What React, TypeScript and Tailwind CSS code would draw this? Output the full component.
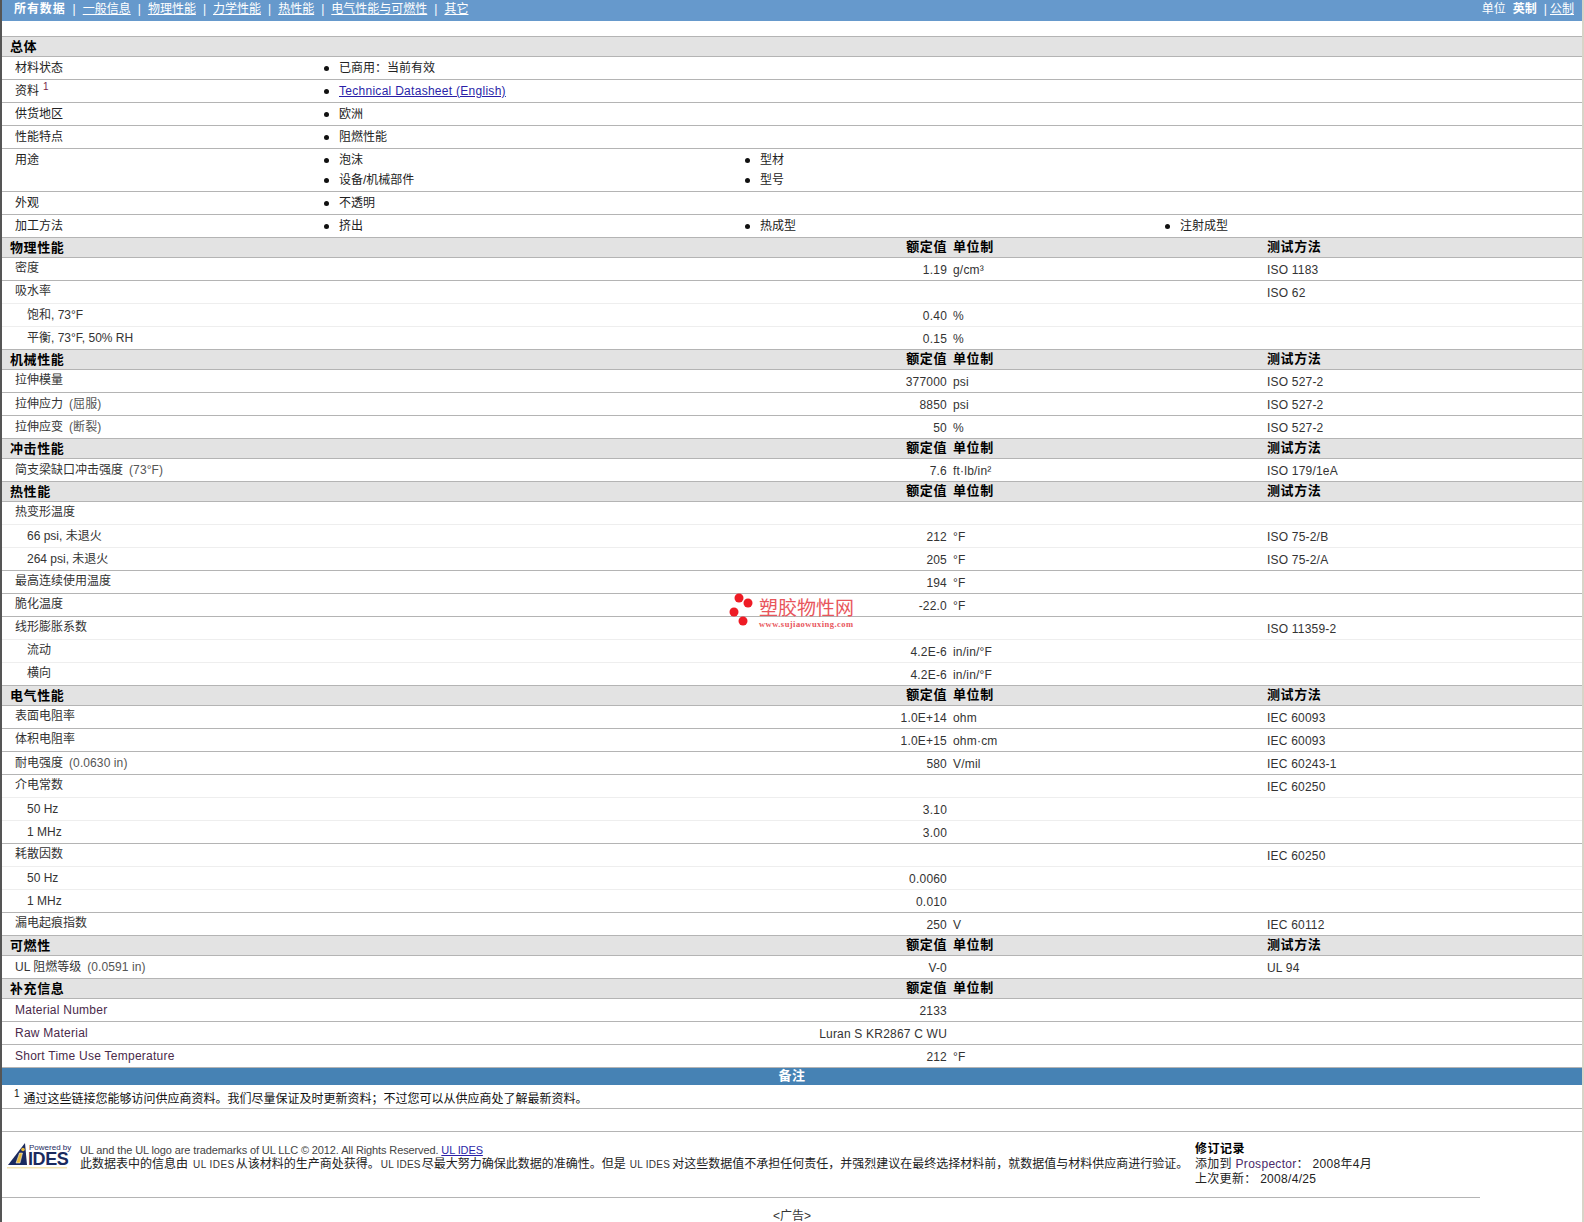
const cjk = "font-['Liberation_Sans','Noto_Sans_CJK_SC',sans-serif]";

type Row = { label: string; indent?: boolean; value?: string; unit?: string; method?: string; note?: string };

const sections: { title: string; method: boolean; rows: Row[] }[] = [
  {
    title: '物理性能',
    method: true,
    rows: [
      { label: '密度', value: '1.19', unit: 'g/cm³', method: 'ISO 1183' },
      { label: '吸水率', method: 'ISO 62' },
      { label: '饱和, 73°F', indent: true, value: '0.40', unit: '%' },
      { label: '平衡, 73°F, 50% RH', indent: true, value: '0.15', unit: '%' },
    ],
  },
  {
    title: '机械性能',
    method: true,
    rows: [
      { label: '拉伸模量', value: '377000', unit: 'psi', method: 'ISO 527-2' },
      { label: '拉伸应力', note: '(屈服)', value: '8850', unit: 'psi', method: 'ISO 527-2' },
      { label: '拉伸应变', note: '(断裂)', value: '50', unit: '%', method: 'ISO 527-2' },
    ],
  },
  {
    title: '冲击性能',
    method: true,
    rows: [{ label: '简支梁缺口冲击强度', note: '(73°F)', value: '7.6', unit: 'ft·lb/in²', method: 'ISO 179/1eA' }],
  },
  {
    title: '热性能',
    method: true,
    rows: [
      { label: '热变形温度' },
      { label: '66 psi, 未退火', indent: true, value: '212', unit: '°F', method: 'ISO 75-2/B' },
      { label: '264 psi, 未退火', indent: true, value: '205', unit: '°F', method: 'ISO 75-2/A' },
      { label: '最高连续使用温度', value: '194', unit: '°F' },
      { label: '脆化温度', value: '-22.0', unit: '°F' },
      { label: '线形膨胀系数', method: 'ISO 11359-2' },
      { label: '流动', indent: true, value: '4.2E-6', unit: 'in/in/°F' },
      { label: '横向', indent: true, value: '4.2E-6', unit: 'in/in/°F' },
    ],
  },
  {
    title: '电气性能',
    method: true,
    rows: [
      { label: '表面电阻率', value: '1.0E+14', unit: 'ohm', method: 'IEC 60093' },
      { label: '体积电阻率', value: '1.0E+15', unit: 'ohm·cm', method: 'IEC 60093' },
      { label: '耐电强度', note: '(0.0630 in)', value: '580', unit: 'V/mil', method: 'IEC 60243-1' },
      { label: '介电常数', method: 'IEC 60250' },
      { label: '50 Hz', indent: true, value: '3.10' },
      { label: '1 MHz', indent: true, value: '3.00' },
      { label: '耗散因数', method: 'IEC 60250' },
      { label: '50 Hz', indent: true, value: '0.0060' },
      { label: '1 MHz', indent: true, value: '0.010' },
      { label: '漏电起痕指数', value: '250', unit: 'V', method: 'IEC 60112' },
    ],
  },
  {
    title: '可燃性',
    method: true,
    rows: [{ label: 'UL 阻燃等级', note: '(0.0591 in)', value: 'V-0', method: 'UL 94' }],
  },
  {
    title: '补充信息',
    method: false,
    rows: [
      { label: 'Material Number', value: '2133' },
      { label: 'Raw Material', value: 'Luran S KR2867 C WU' },
      { label: 'Short Time Use Temperature', value: '212', unit: '°F' },
    ],
  },
];

const general: { label: string; sup?: boolean; items: string[][]; tall?: boolean }[] = [
  { label: '材料状态', items: [['已商用：当前有效']] },
  { label: '资料', sup: true, items: [['Technical Datasheet (English)']] },
  { label: '供货地区', items: [['欧洲']] },
  { label: '性能特点', items: [['阻燃性能']] },
  { label: '用途', tall: true, items: [['泡沫', '设备/机械部件'], ['型材', '型号']] },
  { label: '外观', items: [['不透明']] },
  { label: '加工方法', items: [['挤出'], ['热成型'], ['注射成型']] },
];

const navLinks = ['一般信息', '物理性能', '力学性能', '热性能', '电气性能与可燃性', '其它'];

function Bullet({ text }: { text: string }) {
  return (
    <div className="flex h-5 items-center">
      <span className="ml-[3px] h-[5px] w-[5px] rounded-full bg-[#111]" />
      <span className="ml-[10px]">
        {text.startsWith('Technical') ? <a className="tracking-[0.28px] text-[#2a1fa8] underline" href="#">{text}</a> : text}
      </span>
    </div>
  );
}

function SectionHead({ title, method, values }: { title: string; method?: boolean; values?: boolean }) {
  return (
    <div className="grid h-5 grid-cols-[698px_247px_320px_1fr] grid-rows-[18px] items-start border-b border-[#b4b4b4] bg-[#e3e3e3] text-[13px] font-bold leading-[16px] tracking-[0.6px] text-black">
      <div className="pl-[8px] pt-[2px]">{title}</div>
      {values && <div className="pt-[1px] text-right">额定值</div>}
      {values && <div className="pl-[6px] pt-[1px]">单位制</div>}
      {method && <div className="pt-[1px]">测试方法</div>}
    </div>
  );
}

function DataRow({ row, next }: { row: Row; next?: Row }) {
  const latin = /^[A-Z][a-z]/.test(row.label);
  const mixed = /[A-Za-z0-9]/.test(row.label);
  return (
    <div className={`grid h-[23px] grid-cols-[698px_247px_320px_1fr] items-center border-b text-[#333] ${next?.indent ? 'border-[#eee]' : 'border-[#b4b4b4]'}`}>
      <div className={`whitespace-nowrap ${mixed ? 'pb-0' : row.note ? 'pb-[1px]' : 'pb-[2px]'} ${row.indent ? 'pl-[25px]' : 'pl-[13px]'} ${latin ? 'tracking-[0.25px] text-[#4a2a4a]' : ''}`}>
        {row.label}
        {row.note && <span className="ml-[6px] tracking-[0.1px] text-[#555]">{row.note}</span>}
      </div>
      <div className="pt-[2px] text-right tracking-[0.2px]">{row.value}</div>
      <div className="pl-[6px] pt-[2px] tracking-[0.2px]">{row.unit}</div>
      <div className="pt-[2px] tracking-[0.2px]">{row.method}</div>
    </div>
  );
}

export default function App() {
  return (
    <div className={`${cjk} relative h-[1222px] w-[1584px] overflow-hidden bg-white text-[12px] text-[#222]`}>
      <div className="ml-[2px] w-[1580px]">
        <div className="flex h-[21px] items-center justify-between bg-[#6699cc] pb-[3px] pl-3 pr-[8px] text-white">
          <div className="flex items-center">
            <b className="font-bold tracking-[0.9px]">所有数据</b>
            {navLinks.map((l) => (
              <span key={l} className="flex items-center">
                <span className="mx-[7px]">|</span>
                <a className="underline" href="#">{l}</a>
              </span>
            ))}
          </div>
          <div className="flex items-center">
            <span>单位</span>
            <b className="ml-[7px] font-bold">英制</b>
            <span className="ml-[7px] mr-[3px]">|</span>
            <a className="underline" href="#">公制</a>
          </div>
        </div>
        <div className="h-[16px] border-b border-[#b4b4b4]" />
        <SectionHead title="总体" />
        {general.map((g) => (
          <div key={g.label} className={`flex border-b border-[#b4b4b4] ${g.tall ? 'h-[43px]' : 'h-[23px]'}`}>
            <div className="w-[319px] pl-[13px] pt-[2px]">
              {g.label}
              {g.sup && <sup className="ml-1 text-[10px] text-[#7a1f4a]">1</sup>}
            </div>
            <div className="grid flex-1 grid-cols-[421px_420px_1fr] pt-[1px]">
              {g.items.map((col, i) => (
                <div key={i}>
                  {col.map((t) => <Bullet key={t} text={t} />)}
                </div>
              ))}
            </div>
          </div>
        ))}
        {sections.map((s) => (
          <div key={s.title}>
            <SectionHead title={s.title} method={s.method} values />
            {s.rows.map((r, i) => <DataRow key={r.label + i} row={r} next={s.rows[i + 1]} />)}
          </div>
        ))}
        <div className="flex h-[17px] items-center justify-center bg-[#4682b4] pb-[1px] text-[13px] font-bold tracking-[0.6px] text-white">备注</div>
        <div className="flex h-[24px] items-center border-b border-[#b4b4b4] pl-[12px] pt-[5px] text-[#111]">
          <sup className="mr-1 text-[10px]">1</sup>
          通过这些链接您能够访问供应商资料。我们尽量保证及时更新资料；不过您可以从供应商处了解最新资料。
        </div>
        <div className="h-[23px] border-b border-[#b4b4b4]" />
        <div className="w-[1478px] border-b border-[#b4b4b4]">
          <div className="flex h-[65px] pt-[11px]">
            <div className="ml-[5px] w-[73px] shrink-0">
              <svg width="66" height="28" viewBox="0 0 66 28">
                <path d="M1 22 L18 0 L20 22 Z" fill="#1b2a5e" />
                <path d="M9 20 L12.5 10 L15.5 10 L13 20 Z" fill="#e8b93a" stroke="#fff" strokeWidth="0.5" />
                <circle cx="16" cy="6.5" r="1.8" fill="#e8b93a" />
                <rect x="0" y="24" width="60" height="1.5" fill="#f3e3b0" />
                <text x="22" y="7" fontSize="8" letterSpacing="0" fill="#1b2a5e" fontFamily="Liberation Sans">Powered by</text>
                <text x="21" y="22" fontSize="18" letterSpacing="-0.4" fontWeight="700" fill="#1b2a5e" fontFamily="Liberation Sans">IDES</text>
              </svg>
            </div>
            <div className="w-[1118px] shrink-0 leading-[14px]">
              <div className="text-[11px] tracking-[-0.12px] text-[#444]">UL and the UL logo are trademarks of UL LLC © 2012. All Rights Reserved. <a className="text-[#2a1fa8] underline" href="#">UL IDES</a></div>
              <div className="whitespace-nowrap text-[#222]">
                此数据表中的信息由
                <span className="pl-[5px] pr-[1px] text-[10px] tracking-[0.45px] text-[#333]">UL IDES</span>
                从该材料的生产商处获得。
                <span className="px-[1px] text-[10px] tracking-[0.2px] text-[#333]">UL IDES</span>
                尽最大努力确保此数据的准确性。但是
                <span className="pl-[4px] pr-[2px] text-[10px] tracking-[0.3px] text-[#333]">UL IDES</span>
                对这些数据值不承担任何责任，并强烈建议在最终选择材料前，就数据值与材料供应商进行验证。
              </div>
            </div>
            <div className="ml-[-3px] mt-[-1px] leading-[15px]">
              <div className="font-bold tracking-[0.5px] text-black">修订记录</div>
              <div className="tracking-[0.3px]">添加到 <span className="text-[#4a2a6a]">Prospector</span>： 2008年4月</div>
              <div className="tracking-[0.3px]">上次更新： 2008/4/25</div>
            </div>
          </div>
        </div>
        <div className="pt-[11px] text-center leading-[14px] text-[#333]">&lt;广告&gt;</div>
      </div>
      <div className="absolute left-0 top-0 h-full w-[2px] bg-[#555]" />
      <div className="absolute right-0 top-0 h-full w-[2px] bg-[#d8d4c8]" />
      <div className="absolute left-[729px] top-[593px] flex items-start">
        <svg width="28" height="34" viewBox="0 0 28 34">
          <circle cx="10" cy="5" r="4.5" fill="#ee1c25" />
          <circle cx="19" cy="10" r="4.5" fill="#ee1c25" />
          <circle cx="5" cy="19" r="4.5" fill="#ee1c25" />
          <circle cx="14" cy="28" r="4.5" fill="#ee1c25" />
        </svg>
        <div className="ml-[2px] mt-[6px] flex flex-col">
          <span className="text-[19px] leading-[20px] text-[#e8565c]">塑胶物性网</span>
          <span className="font-['Liberation_Serif',serif] text-[8.5px] font-bold leading-[10px] tracking-[0.45px] text-[#e8565c]">www.sujiaowuxing.com</span>
        </div>
      </div>
    </div>
  );
}
